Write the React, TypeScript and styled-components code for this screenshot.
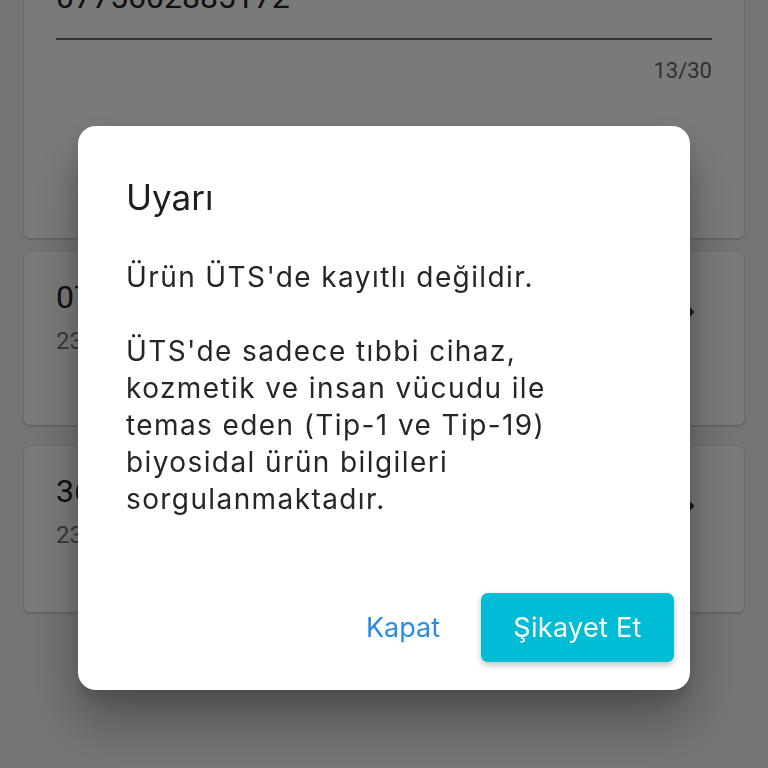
import styled, { createGlobalStyle } from 'styled-components'
import { ChevronRight } from 'lucide-react'

const GlobalStyle = createGlobalStyle`
  html, body {
    margin: 0;
    padding: 0;
    background: #f2f2f2;
    font-family: Roboto, "Noto Sans", "Liberation Sans", sans-serif;
    overflow: hidden;
  }
`

const Page = styled.div`
  width: 768px;
  height: 768px;
  overflow: hidden;
  padding: 0 24px;
  box-sizing: border-box;
  display: flex;
  flex-direction: column;
`

const Card = styled.div<{ $height: number; $gap: number }>`
  background: #ffffff;
  border-radius: 6px;
  box-shadow: 0 1px 3px rgba(0, 0, 0, 0.25);
  height: ${({ $height }) => $height}px;
  margin-top: ${({ $gap }) => $gap}px;
  flex-shrink: 0;
  box-sizing: border-box;
`

const InputCard = styled(Card)`
  padding: 17px 32px 0;
  border-radius: 0 0 6px 6px;
`

const InputValue = styled.div`
  font-size: 32px;
  line-height: 40px;
  color: #222;
  padding-bottom: 21px;
  border-bottom: 2px solid #6a6a6a;
`

const Counter = styled.div`
  margin-top: 18px;
  text-align: right;
  font-size: 22px;
  line-height: 26px;
  color: #666;
`

const ListCard = styled(Card)`
  display: flex;
  justify-content: space-between;
  align-items: flex-start;
  padding: 25px 42px 0 32px;
`

const ListText = styled.div`
  display: flex;
  flex-direction: column;
  gap: 8px;
`

const Code = styled.div`
  font-size: 32px;
  line-height: 40px;
  color: #222;
`

const DateText = styled.div`
  font-size: 24px;
  line-height: 32px;
  color: #777;
`

const Chevron = styled.div`
  color: #333;
  margin-top: 22px;
  display: flex;
`

const Overlay = styled.div`
  position: fixed;
  inset: 0;
  background: rgba(0, 0, 0, 0.52);
`

const Dialog = styled.div`
  position: fixed;
  left: 78px;
  top: 126px;
  width: 612px;
  height: 564px;
  background: #ffffff;
  border-radius: 18px;
  box-shadow: 0 30px 50px rgba(0, 0, 0, 0.3), 0 10px 20px rgba(0, 0, 0, 0.12);
  box-sizing: border-box;
  padding: 51px 16px 28px 48px;
  display: flex;
  flex-direction: column;
  font-family: Inter, "Noto Sans", "Liberation Sans", sans-serif;
`

const Title = styled.h2`
  margin: 0;
  font-size: 35px;
  line-height: 40px;
  font-weight: 400;
  color: #1e1e1e;
`

const Body = styled.div`
  margin-top: 42px;
  width: 470px;
  flex: 1;
  font-size: 28px;
  line-height: 37px;
  letter-spacing: 1.4px;
  color: #262626;
`

const Paragraph = styled.p`
  margin: 0 0 37px;
`

const Actions = styled.div`
  display: flex;
  justify-content: flex-end;
  align-items: center;
  gap: 25px;
`

const TextButton = styled.button`
  border: none;
  background: none;
  font-family: inherit;
  font-size: 27px;
  font-weight: 400;
  color: #2b8ae6;
  padding: 0 16px;
  height: 69px;
  cursor: pointer;
`

const PrimaryButton = styled.button`
  border: none;
  background: #00bcd4;
  color: #ffffff;
  font-family: inherit;
  font-size: 27px;
  font-weight: 400;
  letter-spacing: 0.3px;
  width: 193px;
  height: 69px;
  border-radius: 7px;
  box-shadow: 0 3px 6px rgba(0, 0, 0, 0.25);
  cursor: pointer;
`

const items = [
  { code: '0775602885172', date: '23.03.2024 14:32', height: 173, gap: 14 },
  { code: '3600523614455', date: '23.03.2024 14:28', height: 166, gap: 21 },
]

export default function App() {
  return (
    <>
      <GlobalStyle />
      <Page>
        <InputCard $height={278} $gap={-40}>
          <InputValue>0775602885172</InputValue>
          <Counter>13/30</Counter>
        </InputCard>
        {items.map((item) => (
          <ListCard key={item.code} $height={item.height} $gap={item.gap}>
            <ListText>
              <Code>{item.code}</Code>
              <DateText>{item.date}</DateText>
            </ListText>
            <Chevron>
              <ChevronRight size={26} strokeWidth={3} />
            </Chevron>
          </ListCard>
        ))}
      </Page>
      <Overlay />
      <Dialog>
        <Title>Uyarı</Title>
        <Body>
          <Paragraph>Ürün ÜTS'de kayıtlı değildir.</Paragraph>
          <Paragraph>
            ÜTS'de sadece tıbbi cihaz, kozmetik ve insan vücudu ile temas eden (Tip-1 ve Tip-19)
            biyosidal ürün bilgileri sorgulanmaktadır.
          </Paragraph>
        </Body>
        <Actions>
          <TextButton>Kapat</TextButton>
          <PrimaryButton>Şikayet Et</PrimaryButton>
        </Actions>
      </Dialog>
    </>
  )
}
